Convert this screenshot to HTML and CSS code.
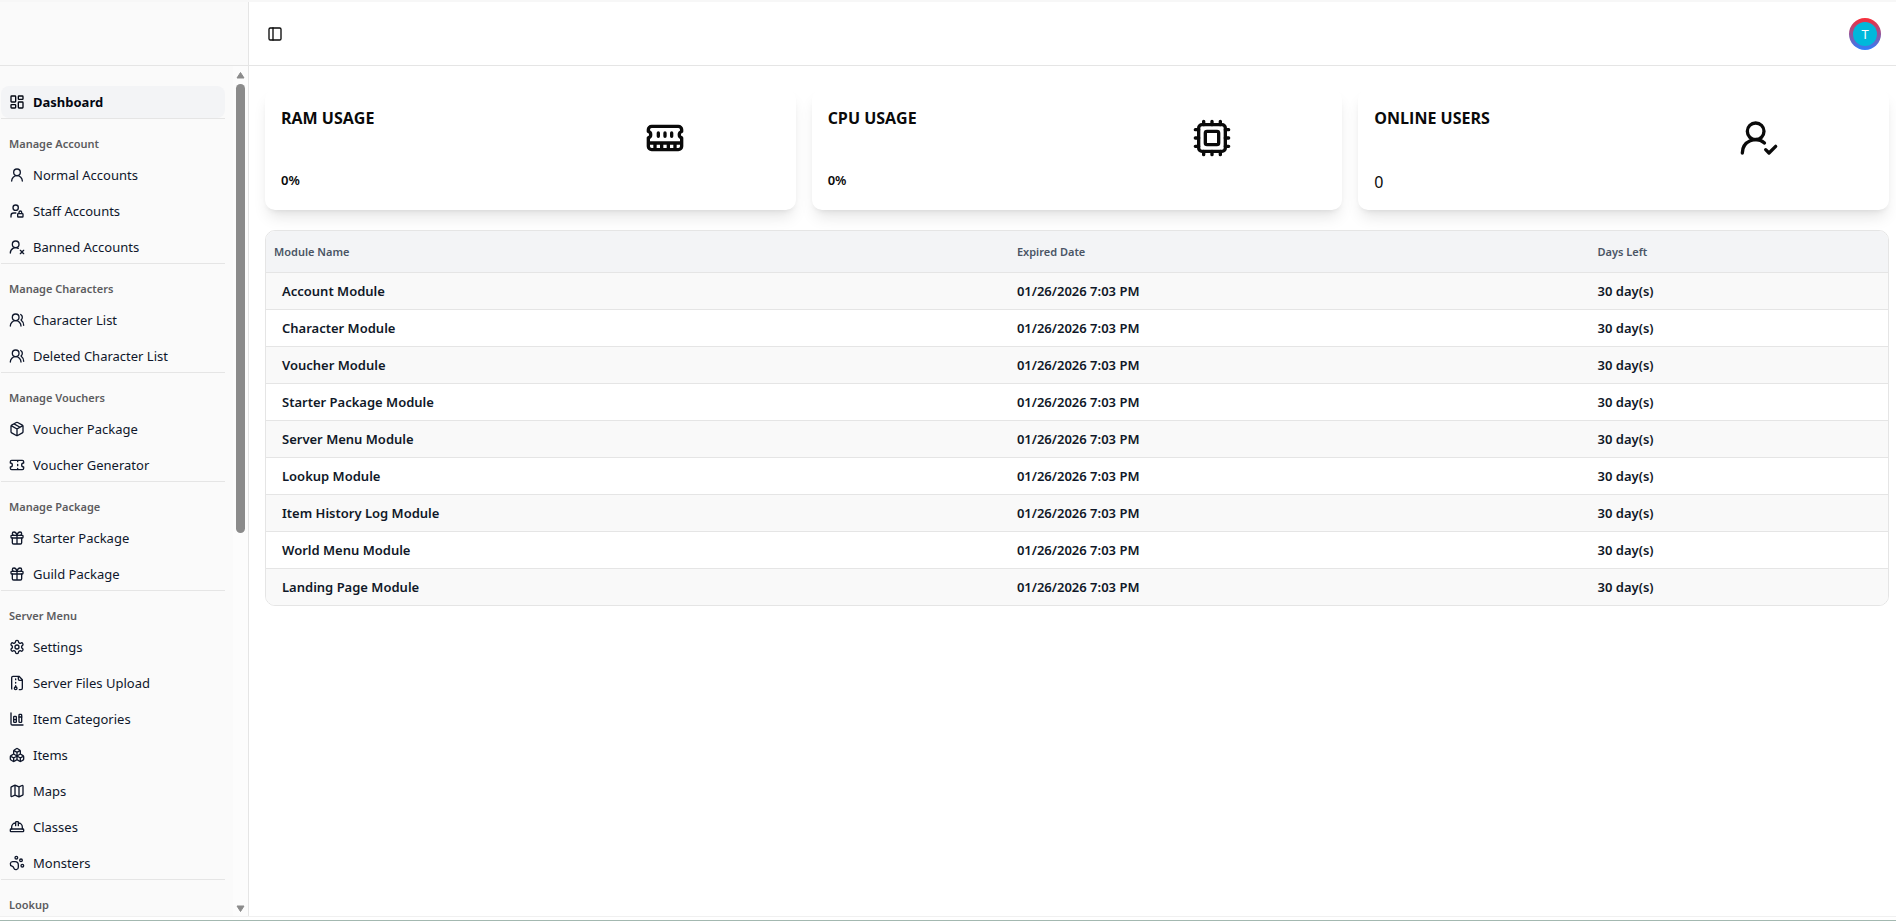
FILE: index.html
```html
<!DOCTYPE html>
<html lang="en">
<head>
<meta charset="utf-8">
<title>Dashboard</title>
<link rel="stylesheet" href="styles.css">
</head>
<body>
<svg class="sprite" aria-hidden="true">
  <symbol id="user" viewBox="0 0 24 24"><circle cx="12" cy="8" r="5"/><path d="M20 21a8 8 0 0 0-16 0"/></symbol>
  <symbol id="users" viewBox="0 0 24 24"><path d="M18 21a8 8 0 0 0-16 0"/><circle cx="10" cy="8" r="5"/><path d="M22 20c0-3.37-2-6.5-4-8a5 5 0 0 0-.45-8.3"/></symbol>
  <symbol id="gift" viewBox="0 0 24 24"><rect x="3" y="8" width="18" height="4" rx="1"/><path d="M12 8v13M19 12v7a2 2 0 0 1-2 2H7a2 2 0 0 1-2-2v-7M7.500 8a2.500 2.500 0 0 1 0-5A4.800 8 0 0 1 12 8a4.800 8 0 0 1 4.500-5 2.500 2.500 0 0 1 0 5"/></symbol>
</svg>
<div class="app">
  <aside class="sidebar">
    <div class="brand"></div>
    <div class="scroller">
      <nav class="nav" aria-label="Main">
        <section class="group">
          <a class="item active" href="#" aria-current="page"><svg class="icon" viewBox="0 0 24 24"><rect width="7" height="9" x="3" y="3" rx="1"/><rect width="7" height="5" x="14" y="3" rx="1"/><rect width="7" height="9" x="14" y="12" rx="1"/><rect width="7" height="5" x="3" y="16" rx="1"/></svg>Dashboard</a>
        </section>
        <section class="group">
          <h2 class="label">Manage Account</h2>
          <a class="item" href="#"><svg class="icon"><use href="#user"/></svg>Normal Accounts</a>
          <a class="item" href="#"><svg class="icon" viewBox="0 0 24 24"><circle cx="10" cy="7" r="4"/><path d="M10.300 15H7a4 4 0 0 0-4 4v2M15 15.500V14a2 2 0 0 1 4 0v1.500"/><rect width="8" height="5" x="13" y="16" rx=".9"/></svg>Staff Accounts</a>
          <a class="item" href="#"><svg class="icon" viewBox="0 0 24 24"><path d="M2 21a8 8 0 0 1 11.873-7"/><circle cx="10" cy="8" r="5"/><path d="m17 17 5 5M22 17l-5 5"/></svg>Banned Accounts</a>
        </section>
        <section class="group">
          <h2 class="label">Manage Characters</h2>
          <a class="item" href="#"><svg class="icon"><use href="#users"/></svg>Character List</a>
          <a class="item" href="#"><svg class="icon"><use href="#users"/></svg>Deleted Character List</a>
        </section>
        <section class="group">
          <h2 class="label">Manage Vouchers</h2>
          <a class="item" href="#"><svg class="icon" viewBox="0 0 24 24"><path d="M11 21.730a2 2 0 0 0 2 0l7-4A2 2 0 0 0 21 16V8a2 2 0 0 0-1-1.730l-7-4a2 2 0 0 0-2 0l-7 4A2 2 0 0 0 3 8v8a2 2 0 0 0 1 1.730zM12 22V12M3.290 7 12 12l8.710-5M7.500 4.270l9 5.150"/></svg>Voucher Package</a>
          <a class="item" href="#"><svg class="icon" viewBox="0 0 24 24"><path d="M2 9a3 3 0 0 1 0 6v2a2 2 0 0 0 2 2h16a2 2 0 0 0 2-2v-2a3 3 0 0 1 0-6V7a2 2 0 0 0-2-2H4a2 2 0 0 0-2 2ZM13 5v2M13 17v2M13 11v2"/></svg>Voucher Generator</a>
        </section>
        <section class="group">
          <h2 class="label">Manage Package</h2>
          <a class="item" href="#"><svg class="icon"><use href="#gift"/></svg>Starter Package</a>
          <a class="item" href="#"><svg class="icon"><use href="#gift"/></svg>Guild Package</a>
        </section>
        <section class="group">
          <h2 class="label">Server Menu</h2>
          <a class="item" href="#"><svg class="icon" viewBox="0 0 24 24"><path d="M12.220 2h-.44a2 2 0 0 0-2 2v.18a2 2 0 0 1-1 1.730l-.43.25a2 2 0 0 1-2 0l-.15-.08a2 2 0 0 0-2.730.73l-.22.38a2 2 0 0 0 .73 2.730l.15.1a2 2 0 0 1 1 1.720v.51a2 2 0 0 1-1 1.740l-.15.09a2 2 0 0 0-.73 2.730l.22.38a2 2 0 0 0 2.730.73l.15-.08a2 2 0 0 1 2 0l.43.25a2 2 0 0 1 1 1.730V20a2 2 0 0 0 2 2h.44a2 2 0 0 0 2-2v-.18a2 2 0 0 1 1-1.730l.43-.25a2 2 0 0 1 2 0l.15.08a2 2 0 0 0 2.730-.73l.22-.39a2 2 0 0 0-.73-2.730l-.15-.08a2 2 0 0 1-1-1.740v-.5a2 2 0 0 1 1-1.740l.15-.09a2 2 0 0 0 .73-2.730l-.22-.38a2 2 0 0 0-2.730-.73l-.15.08a2 2 0 0 1-2 0l-.43-.25a2 2 0 0 1-1-1.730V4a2 2 0 0 0-2-2z"/><circle cx="12" cy="12" r="3"/></svg>Settings</a>
          <a class="item" href="#"><svg class="icon" viewBox="0 0 24 24"><path d="M10 12v-1M10 18v-2M10 7V6M14 2v4a2 2 0 0 0 2 2h4M15.500 22H18a2 2 0 0 0 2-2V7l-5-5H6a2 2 0 0 0-2 2v16a2 2 0 0 0 .274 1.010"/><circle cx="10" cy="20" r="2"/></svg>Server Files Upload</a>
          <a class="item" href="#"><svg class="icon" viewBox="0 0 24 24"><path d="M11 13H7M19 9h-4M3 3v16a2 2 0 0 0 2 2h16"/><rect x="15" y="5" width="4" height="12" rx="1"/><rect x="7" y="8" width="4" height="9" rx="1"/></svg>Item Categories</a>
          <a class="item" href="#"><svg class="icon" viewBox="0 0 24 24"><path d="M2.970 12.920A2 2 0 0 0 2 14.630v3.240a2 2 0 0 0 .97 1.710l3 1.800a2 2 0 0 0 2.060 0L12 19v-5.500l-5-3-4.030 2.420ZM7 16.500l-4.740-2.850M7 16.500l5-3M7 16.500v5.170M12 13.500V19l3.970 2.380a2 2 0 0 0 2.060 0l3-1.800a2 2 0 0 0 .97-1.710v-3.240a2 2 0 0 0-.97-1.710L17 10.500l-5 3ZM17 16.500l-5-3M17 16.500l4.740-2.850M17 16.500v5.170M7.970 4.420A2 2 0 0 0 7 6.130v4.370l5 3 5-3V6.130a2 2 0 0 0-.97-1.710l-3-1.800a2 2 0 0 0-2.060 0l-3 1.800ZM12 8 7.260 5.150M12 8l4.740-2.850M12 13.500V8"/></svg>Items</a>
          <a class="item" href="#"><svg class="icon" viewBox="0 0 24 24"><path d="M14.106 5.553a2 2 0 0 0 1.788 0l3.659-1.830A1 1 0 0 1 21 4.619v12.764a1 1 0 0 1-.553.894l-4.553 2.277a2 2 0 0 1-1.788 0l-4.212-2.106a2 2 0 0 0-1.788 0l-3.659 1.830A1 1 0 0 1 3 19.381V6.618a1 1 0 0 1 .553-.894l4.553-2.277a2 2 0 0 1 1.788 0zM15 5.764v15M9 3.236v15"/></svg>Maps</a>
          <a class="item" href="#"><svg class="icon" viewBox="0 0 24 24"><path d="M10 10V5a1 1 0 0 1 1-1h2a1 1 0 0 1 1 1v5M14 6a6 6 0 0 1 6 6v3M4 15v-3a6 6 0 0 1 6-6"/><rect x="2" y="15" width="20" height="4" rx="1"/></svg>Classes</a>
          <a class="item" href="#"><svg class="icon" viewBox="0 0 24 24"><circle cx="11" cy="4" r="2"/><circle cx="18" cy="8" r="2"/><circle cx="20" cy="16" r="2"/><path d="M9 10a5 5 0 0 1 5 5v3.500a3.500 3.500 0 0 1-6.840 1.045Q6.520 17.480 4.460 16.840A3.500 3.500 0 0 1 5.500 10Z"/></svg>Monsters</a>
        </section>
        <section class="group">
          <h2 class="label">Lookup</h2>
        </section>
      </nav>
      <div class="scrollbar" aria-hidden="true">
        <svg class="arrow" viewBox="0 0 9 8"><path d="M4.500 1.500 8 7H1Z"/></svg>
        <div class="track"><div class="thumb"></div></div>
        <svg class="arrow" viewBox="0 0 9 8"><path d="M4.500 6.500 8 1H1Z"/></svg>
      </div>
    </div>
  </aside>
  <div class="content">
    <header class="topbar">
      <button class="toggle" type="button" aria-label="Toggle sidebar"><svg class="icon" viewBox="0 0 24 24"><rect width="18" height="18" x="3" y="3" rx="2"/><path d="M9 3v18"/></svg></button>
      <button class="avatar" type="button" aria-label="Account menu"><span class="initial">T</span></button>
    </header>
    <main class="main">
      <div class="cards">
        <article class="card">
          <div class="stat"><h3 class="title">RAM USAGE</h3><p class="value">0%</p></div>
          <svg class="glyph" viewBox="0 0 24 24"><path d="M6 19v-3M10 19v-3M14 19v-3M18 19v-3M8 11V9M16 11V9M12 11V9M2 15h20M2 7a2 2 0 0 1 2-2h16a2 2 0 0 1 2 2v1.100a2 2 0 0 0 0 3.837V17a2 2 0 0 1-2 2H4a2 2 0 0 1-2-2v-5.100a2 2 0 0 0 0-3.837Z"/></svg>
        </article>
        <article class="card">
          <div class="stat"><h3 class="title">CPU USAGE</h3><p class="value">0%</p></div>
          <svg class="glyph" viewBox="0 0 24 24"><rect width="16" height="16" x="4" y="4" rx="2"/><rect width="8" height="8" x="8" y="8" rx="1"/><path d="M12 20v2M12 2v2M17 20v2M17 2v2M2 12h2M2 17h2M2 7h2M20 12h2M20 17h2M20 7h2M7 20v2M7 2v2"/></svg>
        </article>
        <article class="card">
          <div class="stat"><h3 class="title">ONLINE USERS</h3><p class="value count">0</p></div>
          <svg class="glyph" viewBox="0 0 24 24"><path d="M2 21a8 8 0 0 1 13.292-6"/><circle cx="10" cy="8" r="5"/><path d="m16 19 2 2 4-4"/></svg>
        </article>
      </div>
      <div class="panel">
        <table class="table">
          <colgroup><col class="col-name"><col class="col-date"><col></colgroup>
          <thead><tr><th scope="col">Module Name</th><th scope="col">Expired Date</th><th scope="col">Days Left</th></tr></thead>
          <tbody>
            <tr><td>Account Module</td><td>01/26/2026 7:03 PM</td><td>30 day(s)</td></tr>
            <tr><td>Character Module</td><td>01/26/2026 7:03 PM</td><td>30 day(s)</td></tr>
            <tr><td>Voucher Module</td><td>01/26/2026 7:03 PM</td><td>30 day(s)</td></tr>
            <tr><td>Starter Package Module</td><td>01/26/2026 7:03 PM</td><td>30 day(s)</td></tr>
            <tr><td>Server Menu Module</td><td>01/26/2026 7:03 PM</td><td>30 day(s)</td></tr>
            <tr><td>Lookup Module</td><td>01/26/2026 7:03 PM</td><td>30 day(s)</td></tr>
            <tr><td>Item History Log Module</td><td>01/26/2026 7:03 PM</td><td>30 day(s)</td></tr>
            <tr><td>World Menu Module</td><td>01/26/2026 7:03 PM</td><td>30 day(s)</td></tr>
            <tr><td>Landing Page Module</td><td>01/26/2026 7:03 PM</td><td>30 day(s)</td></tr>
          </tbody>
        </table>
      </div>
    </main>
  </div>
</div>
<div class="footline"></div>
</body>
</html>
```

FILE: styles.css
```css
* { box-sizing: border-box; margin: 0; padding: 0; }

body {
  display: flex;
  flex-direction: column;
  height: 100vh;
  overflow: hidden;
  background: #fff;
  color: #0a0a0a;
  font: 400 13px/20px "Segoe UI", "Noto Sans", "Open Sans", sans-serif;
}

button { border: 0; background: none; color: inherit; font: inherit; cursor: pointer; }
a { color: inherit; text-decoration: none; }
.sprite { display: none; }

.app {
  flex: 1;
  min-height: 0;
  display: flex;
  border-top: 2px solid #f7f7f7;
}

.footline {
  height: 5px;
  flex: none;
  border-top: 1px solid #f0f0f0;
  border-bottom: 1px solid #a3b8b0;
}

.sidebar {
  flex: none;
  width: 249px;
  display: flex;
  flex-direction: column;
  background: #fafafa;
  border-right: 1px solid #e5e5e5;
}

.brand { flex: none; height: 64px; border-bottom: 1px solid #e5e5e5; }
.scroller { flex: 1; min-height: 0; display: flex; }

.nav {
  flex: 1;
  overflow: hidden;
  padding: 12px 8px 0 1px;
  color: #0f172b;
}

.group {
  display: flex;
  flex-direction: column;
  gap: 4px;
  padding-top: 8px;
  border-bottom: 1px solid #e5e5e5;
}

.label {
  height: 32px;
  margin-bottom: -4px;
  padding: 0 8px;
  color: #5c5c60;
  font-size: 11px;
  font-weight: 600;
  line-height: 34px;
}

.item {
  display: flex;
  align-items: center;
  gap: 8px;
  height: 32px;
  padding: 0 8px;
  border-radius: 8px;
  white-space: nowrap;
}

.item.active { background: #f3f4f6; color: #030712; font-weight: 700; }

.icon, .glyph {
  flex: none;
  width: 16px;
  height: 16px;
  fill: none;
  stroke: currentColor;
  stroke-width: 2;
  stroke-linecap: round;
  stroke-linejoin: round;
}

.scrollbar {
  flex: none;
  width: 15px;
  display: flex;
  flex-direction: column;
  align-items: center;
  gap: 5px;
  padding: 5px 0 3px;
  background: #fcfcfc;
}

.arrow {
  width: 9px;
  height: 8px;
  fill: #8b8b8b;
  stroke: #8b8b8b;
  stroke-linejoin: round;
}

.track { flex: 1; width: 9px; }
.thumb { height: 55%; border-radius: 5px; background: #8b8b8b; }

.content { flex: 1; min-width: 0; display: flex; flex-direction: column; }

.topbar {
  flex: none;
  height: 64px;
  display: flex;
  align-items: center;
  justify-content: space-between;
  padding: 0 15px 0 12px;
  border-bottom: 1px solid #e5e5e5;
}

.toggle { width: 28px; height: 28px; display: grid; place-items: center; }

.avatar {
  width: 32px;
  height: 32px;
  padding: 4px;
  border-radius: 50%;
  background: linear-gradient(#fb2c36, #2b7fff);
}

.initial {
  display: block;
  border-radius: 50%;
  background: #00b8db;
  color: #fff;
  line-height: 24px;
}

.main {
  flex: 1;
  display: flex;
  flex-direction: column;
  gap: 20px;
  padding: 23px 7px 0 16px;
}

.cards { display: grid; grid-template-columns: repeat(3, 1fr); gap: 16px; }

.card {
  display: grid;
  grid-template-columns: 1fr 1fr;
  min-height: 121px;
  padding: 16px 2px 12px 16px;
  border-radius: 10px;
  background: #fff;
  box-shadow: 0 10px 15px -3px rgb(0 0 0 / 0.1), 0 4px 6px -4px rgb(0 0 0 / 0.1);
}

.stat { display: flex; flex-direction: column; gap: 39px; }
.title { font-family: "Segoe UI", "Open Sans", sans-serif; font-size: 16px; font-weight: 700; line-height: 26px; }
.value { font-weight: 600; line-height: 20px; }
.value.count { font-size: 16px; font-weight: 400; line-height: 24px; }
.glyph { width: 40px; height: 40px; margin-top: 13px; justify-self: center; }

.panel { border: 1px solid #e5e5e5; border-radius: 10px; overflow: hidden; }
.table { width: 100%; table-layout: fixed; border-collapse: collapse; }
.col-name { width: 45.8%; }
.col-date { width: 35.8%; }

th {
  height: 41px;
  padding: 2px 8px 0;
  background: #f3f4f6;
  color: #4a5565;
  font-size: 11px;
  font-weight: 600;
  text-align: left;
}

td { height: 37px; padding: 0 8px; color: #101828; font-weight: 600; }
td:first-child { padding-left: 16px; }
tbody tr { border-top: 1px solid #e5e5e5; }
tbody tr:nth-child(odd) { background: #f9f9f9; }
```
